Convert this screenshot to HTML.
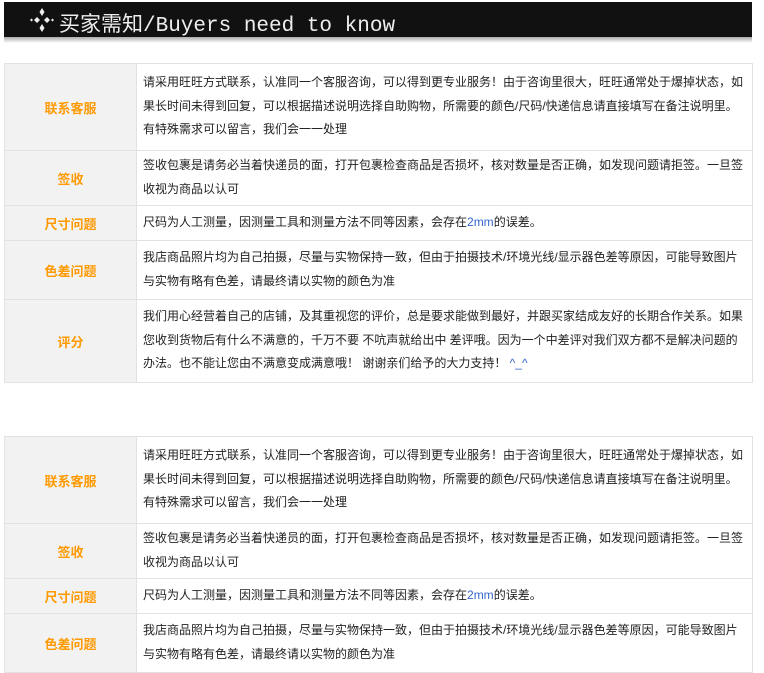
<!DOCTYPE html>
<html><head><meta charset="utf-8"><style>
body{margin:0;background:#fff;width:764px;height:638px;overflow:hidden;font-family:"Liberation Sans","Noto Sans CJK SC",sans-serif;}
.hd{position:absolute;left:4px;top:2px;width:748px;height:35px;background:#111;color:#eee;}
.hd:after{content:"";position:absolute;left:0;top:35px;width:748px;height:6px;background:linear-gradient(#aaa,#fff);}
.hd span{position:absolute;left:55px;top:6px;font-size:21px;font-family:"Liberation Mono","Noto Sans CJK SC",monospace;white-space:nowrap;}
table{position:absolute;left:4px;width:749px;border-collapse:collapse;font-size:12px;}
td{border:1px solid #e2e2e2;}
td.l{width:129px;background:#f2f2f2;color:#f90;font-weight:bold;font-size:13px;text-align:center;}
td.r{color:#222;line-height:23.5px;padding:2px 5px 3px 6px;white-space:nowrap;}
.b{color:#36c}
</style></head><body>
<div class="hd"><svg style="position:absolute;left:26px;top:6px" width="24" height="24" viewBox="0 0 24 24" fill="#eee"><path d="M12 0l2.5 4-2.5 4-2.5-4zM12 16l2.5 4-2.5 4-2.5-4zM4 12l3-3 3 3-3 3zM14 12l3-3 3 3-3 3zM0 12l1.5-1.5 1.5 1.5-1.5 1.5zM21 12l1.5-1.5 1.5 1.5-1.5 1.5z"/></svg><span>买家需知/Buyers need to know</span></div>

<table style="top:63px">
<tr style="height:87px"><td class="l">联系客服</td><td class="r">请采用旺旺方式联系，认准同一个客服咨询，可以得到更专业服务！由于咨询里很大，旺旺通常处于爆掉状态，如<br>果长时间未得到回复，可以根据描述说明选择自助购物，所需要的颜色/尺码/快递信息请直接填写在备注说明里。<br>有特殊需求可以留言，我们会一一处理</td></tr>
<tr style="height:55px"><td class="l">签收</td><td class="r">签收包裹是请务必当着快递员的面，打开包裹检查商品是否损坏，核对数量是否正确，如发现问题请拒签。一旦签<br>收视为商品以认可</td></tr>
<tr style="height:35px"><td class="l">尺寸问题</td><td class="r">尺码为人工测量，因测量工具和测量方法不同等因素，会存在<span class="b">2mm</span>的误差。</td></tr>
<tr style="height:59px"><td class="l">色差问题</td><td class="r">我店商品照片均为自己拍摄，尽量与实物保持一致，但由于拍摄技术/环境光线/显示器色差等原因，可能导致图片<br>与实物有略有色差，请最终请以实物的颜色为准</td></tr>
<tr style="height:83px"><td class="l">评分</td><td class="r">我们用心经营着自己的店铺，及其重视您的评价，总是要求能做到最好，并跟买家结成友好的长期合作关系。如果<br>您收到货物后有什么不满意的，千万不要 不吭声就给出中 差评哦。因为一个中差评对我们双方都不是解决问题的<br>办法。也不能让您由不满意变成满意哦！ 谢谢亲们给予的大力支持！<span class="b"> ^_^</span></td></tr>
</table>

<table style="top:436px">
<tr style="height:87px"><td class="l">联系客服</td><td class="r">请采用旺旺方式联系，认准同一个客服咨询，可以得到更专业服务！由于咨询里很大，旺旺通常处于爆掉状态，如<br>果长时间未得到回复，可以根据描述说明选择自助购物，所需要的颜色/尺码/快递信息请直接填写在备注说明里。<br>有特殊需求可以留言，我们会一一处理</td></tr>
<tr style="height:55px"><td class="l">签收</td><td class="r">签收包裹是请务必当着快递员的面，打开包裹检查商品是否损坏，核对数量是否正确，如发现问题请拒签。一旦签<br>收视为商品以认可</td></tr>
<tr style="height:35px"><td class="l">尺寸问题</td><td class="r">尺码为人工测量，因测量工具和测量方法不同等因素，会存在<span class="b">2mm</span>的误差。</td></tr>
<tr style="height:59px"><td class="l">色差问题</td><td class="r">我店商品照片均为自己拍摄，尽量与实物保持一致，但由于拍摄技术/环境光线/显示器色差等原因，可能导致图片<br>与实物有略有色差，请最终请以实物的颜色为准</td></tr>
</table>
</body></html>
